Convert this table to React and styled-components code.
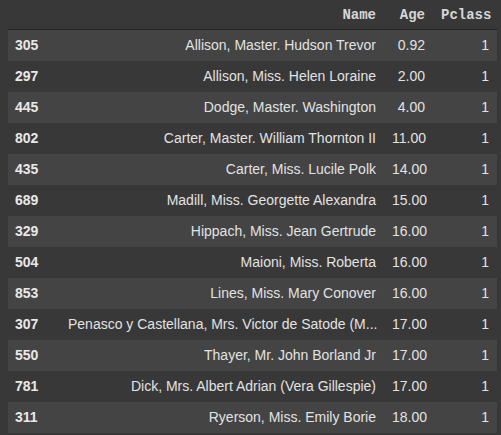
import styled, { createGlobalStyle } from "styled-components";

const rows = [
  ["305", "Allison, Master. Hudson Trevor", "0.92", "1"],
  ["297", "Allison, Miss. Helen Loraine", "2.00", "1"],
  ["445", "Dodge, Master. Washington", "4.00", "1"],
  ["802", "Carter, Master. William Thornton II", "11.00", "1"],
  ["435", "Carter, Miss. Lucile Polk", "14.00", "1"],
  ["689", "Madill, Miss. Georgette Alexandra", "15.00", "1"],
  ["329", "Hippach, Miss. Jean Gertrude", "16.00", "1"],
  ["504", "Maioni, Miss. Roberta", "16.00", "1"],
  ["853", "Lines, Miss. Mary Conover", "16.00", "1"],
  ["307", "Penasco y Castellana, Mrs. Victor de Satode (M...", "17.00", "1"],
  ["550", "Thayer, Mr. John Borland Jr", "17.00", "1"],
  ["781", "Dick, Mrs. Albert Adrian (Vera Gillespie)", "17.00", "1"],
  ["311", "Ryerson, Miss. Emily Borie", "18.00", "1"],
];

const Global = createGlobalStyle`
  html, body {
    margin: 0;
    background: #383838;
  }
  body {
    padding: 0 4px 0 8px;
    font-family: "Liberation Sans", Arial, sans-serif;
  }
`;

const Table = styled.table`
  width: 489px;
  border-collapse: collapse;
  table-layout: fixed;
  color: #e2e2e2;
  font-size: 14px;
`;

const HeadCell = styled.th`
  height: 29px;
  padding: 0 8px;
  text-align: right;
  font-family: "Liberation Mono", "Courier New", monospace;
  font-weight: bold;
  font-size: 14px;
  color: #d6d6d6;
  border-bottom: 1px solid #242424;
  white-space: nowrap;
`;

const Row = styled.tr`
  height: 31px;
  background: ${(p) => (p.$odd ? "#444444" : "#383838")};
`;

const IndexCell = styled.th`
  padding: 0 7px;
  text-align: left;
  font-weight: bold;
  color: #e8e8e8;
`;

const Cell = styled.td`
  padding: 0 8px;
  text-align: right;
  white-space: nowrap;
  overflow: hidden;
`;

export default function App() {
  return (
    <>
      <Global />
      <Table>
        <colgroup>
          <col style={{ width: 52 }} />
          <col style={{ width: 324 }} />
          <col style={{ width: 49 }} />
          <col style={{ width: 64 }} />
        </colgroup>
        <thead>
          <tr>
            <HeadCell />
            <HeadCell>Name</HeadCell>
            <HeadCell>Age</HeadCell>
            <HeadCell>Pclass</HeadCell>
          </tr>
        </thead>
        <tbody>
          {rows.map((r, i) => (
            <Row key={r[0]} $odd={i % 2 === 0}>
              <IndexCell>{r[0]}</IndexCell>
              <Cell>{r[1]}</Cell>
              <Cell>{r[2]}</Cell>
              <Cell>{r[3]}</Cell>
            </Row>
          ))}
        </tbody>
      </Table>
    </>
  );
}
